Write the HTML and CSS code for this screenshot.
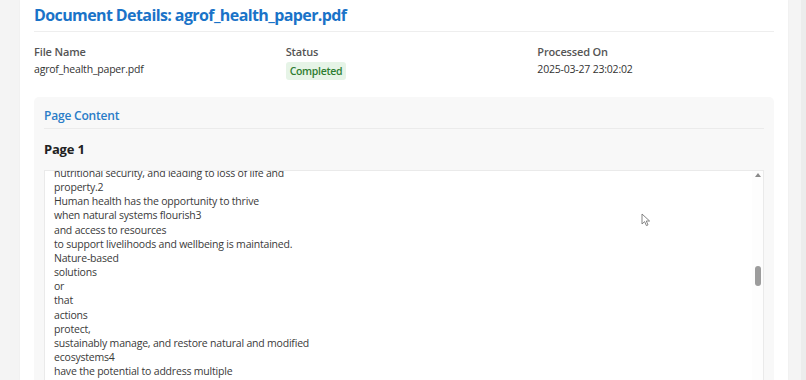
FILE: index.html
```html
<!DOCTYPE html>
<html lang="en">
<head>
<meta charset="utf-8">
<title>Document Details</title>
<link rel="stylesheet" href="styles.css">
</head>
<body>
<div class="page">
  <main class="card">
    <h1 class="title">Document Details: agrof_health_paper.pdf</h1>
    <div class="meta">
      <div class="meta-item">
        <div class="meta-label">File Name</div>
        <div class="meta-value">agrof_health_paper.pdf</div>
      </div>
      <div class="meta-item">
        <div class="meta-label">Status</div>
        <div class="meta-value"><span class="badge">Completed</span></div>
      </div>
      <div class="meta-item">
        <div class="meta-label">Processed On</div>
        <div class="meta-value">2025-03-27 23:02:02</div>
      </div>
    </div>
    <section class="content">
      <h2 class="content-title">Page Content</h2>
      <h3 class="page-title">Page 1</h3>
      <div class="text-box">
        <div class="text-view">
          <div class="text">nutritional security, and leading to loss of life and
property.2
Human health has the opportunity to thrive
when natural systems flourish3
and access to resources
to support livelihoods and wellbeing is maintained.
Nature-based
solutions
or
that
actions
protect,
sustainably manage, and restore natural and modified
ecosystems4
have the potential to address multiple</div>
          <svg class="cursor" width="10" height="14" viewBox="0 0 10 14"><path d="M1 1 L1 11 L3.6 8.6 L5.4 12.6 L7 11.9 L5.3 8 L8.6 8 Z" fill="#fff" stroke="#777" stroke-width="0.9" stroke-linejoin="round"/></svg>
        </div>
        <div class="scrollbar">
          <span class="arrow"></span>
          <span class="thumb"></span>
        </div>
      </div>
    </section>
  </main>
  <div class="page-scroll"></div>
</div>
</body>
</html>
```

FILE: styles.css
```css
* { box-sizing: border-box; }
html, body { margin: 0; padding: 0; }
body {
  background: #f4f4f4;
  font-family: "Open Sans", "Noto Sans", sans-serif;
  color: #333;
  height: 380px;
  overflow: hidden;
}
.page {
  display: flex;
  height: 380px;
  padding-left: 20px;
}
.card {
  width: 768px;
  background: #fff;
  padding: 4px 14px 0 14px;
  box-shadow: 0 0 2px rgba(0,0,0,0.04);
  display: flex;
  flex-direction: column;
}
.title {
  margin: 0;
  font-size: 16px;
  line-height: 22px;
  font-weight: 700;
  color: #1a73c8;
  padding-bottom: 5px;
  border-bottom: 1px solid #eeeeee;
  letter-spacing: -0.6px;
}
.meta {
  display: grid;
  grid-template-columns: repeat(3, 1fr);
  column-gap: 15px;
  margin-top: 13px;
}
.meta-label {
  font-size: 11px;
  line-height: 14px;
  font-weight: 600;
  color: #555;
  letter-spacing: -0.15px;
}
.meta-value {
  font-size: 10.5px;
  line-height: 14px;
  color: #333;
  margin-top: 3px;
  letter-spacing: -0.2px;
}
.badge {
  display: inline-block;
  background: #e6f4e7;
  color: #2e7d32;
  font-weight: 600;
  padding: 2px 4px;
  border-radius: 3px;
  font-size: 10.5px;
  line-height: 14px;
  letter-spacing: -0.3px;
}
.content {
  margin-top: 17px;
  background: #f8f8f8;
  border-radius: 5px 5px 0 0;
  padding: 10px 10px 0 10px;
  flex: 1;
  min-height: 0;
  display: flex;
  flex-direction: column;
}
.content-title {
  margin: 0;
  font-size: 12px;
  line-height: 17px;
  font-weight: 600;
  color: #2a7cc7;
  padding-bottom: 4px;
  border-bottom: 1px solid #ebebeb;
  letter-spacing: -0.2px;
}
.page-title {
  margin: 11px 0 0 0;
  font-size: 13px;
  line-height: 18px;
  font-weight: 700;
  color: #222;
  letter-spacing: -0.2px;
}
.text-box {
  margin-top: 12px;
  display: flex;
  background: #fff;
  border: 1px solid #eaeaea;
  border-bottom: 0;
  flex: 1;
  min-height: 0;
  overflow: hidden;
}
.text-view {
  flex: 1;
  position: relative;
  overflow: hidden;
  padding-left: 9px;
}
.text {
  margin-top: -5px;
  white-space: pre-wrap;
  font-size: 10.5px;
  line-height: 14.15px;
  color: #3a3a3a;
  letter-spacing: -0.2px;
}
.cursor {
  position: absolute;
  left: 596px;
  top: 42px;
}
.scrollbar {
  width: 11px;
  background: #fdfdfd;
  display: flex;
  flex-direction: column;
  align-items: center;
}
.arrow {
  margin-top: 2px;
  width: 0;
  height: 0;
  border-left: 3.5px solid transparent;
  border-right: 3.5px solid transparent;
  border-bottom: 4px solid #8a8a8a;
}
.thumb {
  margin-top: 89px;
  width: 6px;
  height: 20px;
  border-radius: 3px;
  background: #9c9c9c;
}
.page-scroll {
  margin-left: 13px;
  width: 5px;
  background: #ececec;
}
```
